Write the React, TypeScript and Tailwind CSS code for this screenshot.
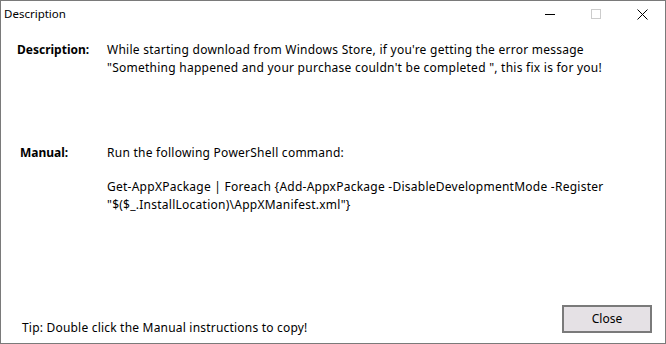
export default function App() {
  const font = { fontFamily: '"Noto Sans", "Open Sans", sans-serif' };
  return (
    <div
      className="w-[666px] h-[344px] border border-[#7a7a7a] bg-white flex flex-col text-[12px] text-black overflow-hidden"
      style={font}
    >
      {/* title bar */}
      <div className="h-[26px] flex items-center shrink-0">
        <span className="pl-[3px] leading-none text-[11.5px]">Description</span>
        <div className="ml-auto flex items-center h-full">
          <div className="w-[46px] h-full flex items-center justify-center">
            <div className="w-[10px] h-px bg-black" />
          </div>
          <div className="w-[46px] h-full flex items-center justify-center">
            <div className="w-[10px] h-[10px] border border-[#cccccc]" />
          </div>
          <div className="w-[46px] h-full flex items-center justify-center">
            <svg width="11" height="11" viewBox="0 0 11 11">
              <path d="M0.5 0.5 L10.5 10.5 M10.5 0.5 L0.5 10.5" stroke="#000" strokeWidth="1" fill="none" />
            </svg>
          </div>
        </div>
      </div>

      {/* body */}
      <div className="flex-1 flex flex-col">
        <div className="flex pt-[14px] leading-[18px]">
          <div className="w-[106px] pl-[16px] font-bold">Description:</div>
          <div className="tracking-[0.25px]">
            While starting download from Windows Store, if you're getting the error message
            <br />
            "Something happened and your purchase couldn't be completed ", this fix is for you!
          </div>
        </div>

        <div className="flex mt-[67px] leading-[18px]">
          <div className="w-[106px] pl-[19px] font-bold">Manual:</div>
          <div className="tracking-[0.25px]">
            <div>Run the following PowerShell command:</div>
            <div className="mt-[16px]">
              Get-AppXPackage | Foreach {"{"}Add-AppxPackage -DisableDevelopmentMode -Register
              <br />
              "$($_.InstallLocation)\AppXManifest.xml"{"}"}
            </div>
          </div>
        </div>

        <div className="mt-auto flex items-end pb-[10px]">
          <span className="pl-[21px] mb-[-4px] leading-[18px] tracking-[0.2px]">
            Tip: Double click the Manual instructions to copy!
          </span>
          <button className="ml-auto mr-[13px] w-[90px] h-[28px] border-2 border-[#7a7a7a] bg-[#e5e1e5] leading-none">
            Close
          </button>
        </div>
      </div>
    </div>
  );
}
